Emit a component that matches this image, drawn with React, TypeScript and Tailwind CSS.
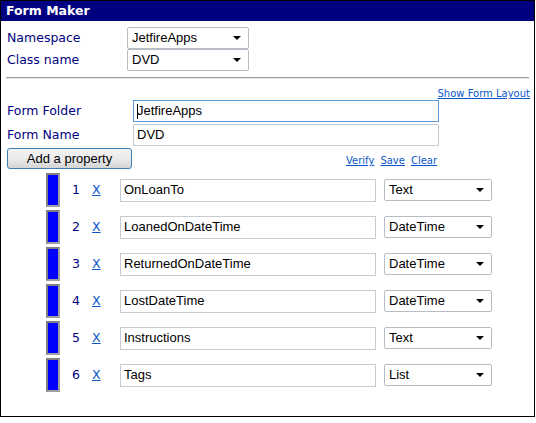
import React from "react";

const verdana = { fontFamily: '"DejaVu Sans", Verdana, sans-serif' };
const arial = { fontFamily: '"Liberation Sans", Arial, sans-serif' };

function FakeSelect({ value, w }: { value: string; w: string }) {
  return (
    <div
      className={`${w} h-[22px] flex items-center justify-between border border-[#b8bcc4] rounded-[2px] bg-white pl-[4px] pr-[7px] text-[13px] text-black`}
      style={arial}
    >
      <span>{value}</span>
      <span className="w-0 h-0 border-l-[4px] border-r-[4px] border-t-[4px] border-l-transparent border-r-transparent border-t-black" />
    </div>
  );
}

const rows = [
  { n: 1, name: "OnLoanTo", type: "Text" },
  { n: 2, name: "LoanedOnDateTime", type: "DateTime" },
  { n: 3, name: "ReturnedOnDateTime", type: "DateTime" },
  { n: 4, name: "LostDateTime", type: "DateTime" },
  { n: 5, name: "Instructions", type: "Text" },
  { n: 6, name: "Tags", type: "List" },
];

export default function App() {
  return (
    <div className="w-[535px] h-[417px] border border-black bg-white flex flex-col">
      <div
        className="h-[20px] bg-[#000080] text-white font-bold text-[12.5px] leading-[20px] pl-[5px]"
        style={verdana}
      >
        Form Maker
      </div>
      <div className="flex flex-col pt-[6px]">
        <div className="flex items-center h-[22px]">
          <div className="w-[126px] pl-[6px] text-[12.5px] text-[#000080]" style={verdana}>
            Namespace
          </div>
          <FakeSelect value="JetfireApps" w="w-[122px]" />
        </div>
        <div className="flex items-center h-[22px]">
          <div className="w-[126px] pl-[6px] text-[12.5px] text-[#000080]" style={verdana}>
            Class name
          </div>
          <FakeSelect value="DVD" w="w-[122px]" />
        </div>
        <div className="mx-[5px] mt-[6px] border-t border-b border-t-[#a0a0a0] border-b-[#e4e4e4]" />
        <div className="flex justify-end pr-[4px] mt-[9px] h-[12px]">
          <a
            className="text-[10px] leading-[12px] text-[#0b57c8] underline"
            style={verdana}
          >
            Show Form Layout
          </a>
        </div>
        <div className="flex items-center h-[22px]">
          <div className="w-[132px] pl-[6px] text-[12.5px] text-[#000080]" style={verdana}>
            Form Folder
          </div>
          <div
            className="w-[306px] h-[22px] border border-[#5a9bd5] bg-white flex items-center pl-[3px] text-[13px]"
            style={arial}
          >
            <span className="w-px h-[15px] bg-black mr-[-1px]" />
            JetfireApps
          </div>
        </div>
        <div className="flex items-center h-[22px] mt-[2px]">
          <div className="w-[132px] pl-[6px] text-[12.5px] text-[#000080]" style={verdana}>
            Form Name
          </div>
          <div
            className="w-[306px] h-[22px] border border-[#c8cbd0] bg-white flex items-center pl-[3px] text-[13px]"
            style={arial}
          >
            DVD
          </div>
        </div>
        <div className="flex items-end h-[21px] mt-[2px]">
          <button
            className="ml-[6px] w-[125px] h-[21px] rounded-[3px] border border-[#3c7fb1] bg-gradient-to-b from-[#f2f2f2] via-[#ebebeb] to-[#d4d4d4] text-[13px] text-black leading-[19px]"
            style={arial}
          >
            Add a property
          </button>
          <div className="flex gap-[6px] ml-[214px] mb-[2px]" style={verdana}>
            <a className="text-[10px] text-[#0b57c8] underline leading-[12px]">Verify</a>
            <a className="text-[10px] text-[#0b57c8] underline leading-[12px]">Save</a>
            <a className="text-[10px] text-[#0b57c8] underline leading-[12px]">Clear</a>
          </div>
        </div>
        <div className="flex flex-col gap-[3px] mt-[4px]">
          {rows.map((r) => (
            <div key={r.n} className="flex items-center h-[34px]">
              <div className="ml-[45px] w-[14px] h-[34px] bg-[#0000ff] border-[2px] border-t-[#808080] border-l-[#808080] border-r-[#a0a0a0] border-b-[#a0a0a0]" />
              <div className="ml-[12px] w-[9px] text-[12.5px] text-[#000080]" style={verdana}>
                {r.n}
              </div>
              <a
                className="ml-[11px] w-[28px] text-[12.5px] text-[#0b57c8] underline"
                style={verdana}
              >
                X
              </a>
              <div
                className="w-[256px] h-[23px] border border-[#c8cbd0] bg-white flex items-center pl-[3px] text-[13px] text-black"
                style={arial}
              >
                {r.name}
              </div>
              <div className="ml-[8px]">
                <FakeSelect value={r.type} w="w-[108px]" />
              </div>
            </div>
          ))}
        </div>
      </div>
    </div>
  );
}
